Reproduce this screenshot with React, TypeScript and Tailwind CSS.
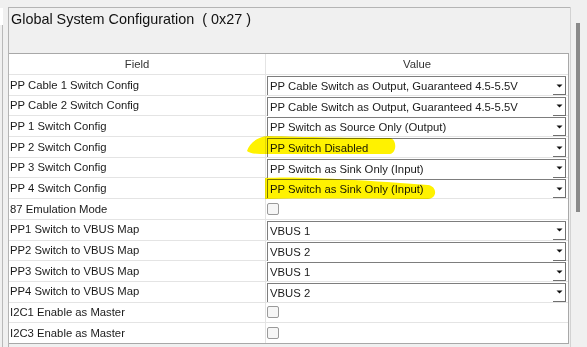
import React from 'react';

type Row =
  | { field: string; kind: 'select'; value: string }
  | { field: string; kind: 'check' };

const rows: Row[] = [
  { field: 'PP Cable 1 Switch Config', kind: 'select', value: 'PP Cable Switch as Output, Guaranteed 4.5-5.5V' },
  { field: 'PP Cable 2 Switch Config', kind: 'select', value: 'PP Cable Switch as Output, Guaranteed 4.5-5.5V' },
  { field: 'PP 1 Switch Config', kind: 'select', value: 'PP Switch as Source Only (Output)' },
  { field: 'PP 2 Switch Config', kind: 'select', value: 'PP Switch Disabled' },
  { field: 'PP 3 Switch Config', kind: 'select', value: 'PP Switch as Sink Only (Input)' },
  { field: 'PP 4 Switch Config', kind: 'select', value: 'PP Switch as Sink Only (Input)' },
  { field: '87 Emulation Mode', kind: 'check' },
  { field: 'PP1 Switch to VBUS Map', kind: 'select', value: 'VBUS 1' },
  { field: 'PP2 Switch to VBUS Map', kind: 'select', value: 'VBUS 2' },
  { field: 'PP3 Switch to VBUS Map', kind: 'select', value: 'VBUS 1' },
  { field: 'PP4 Switch to VBUS Map', kind: 'select', value: 'VBUS 2' },
  { field: 'I2C1 Enable as Master', kind: 'check' },
  { field: 'I2C3 Enable as Master', kind: 'check' },
];

const Combo: React.FC<{ value: string }> = ({ value }) => (
  <div className="h-[19px] mt-[1px] ml-[1px] mr-[2px] flex items-stretch bg-white border-t border-l border-[#7d7d7d]">
    <span className="flex-1 pl-[2px] leading-[18px] text-[#1a1a1a] truncate">{value}</span>
    <div className="w-[13px] flex items-center justify-center border-r border-b border-[#6f6f6f]">
      <svg width="7" height="4" viewBox="0 0 7 4">
        <path d="M0.5 0.5 L6.5 0.5 L3.5 3.5 Z" fill="#111" />
      </svg>
    </div>
  </div>
);

const Check: React.FC = () => (
  <div className="ml-[1px] w-[12px] h-[12px] rounded-[2px] border border-[#9a9a9a] bg-[#f6f6f6]" />
);

export default function App() {
  return (
    <div
      className="relative w-[587px] h-[347px] overflow-hidden bg-[#f0f0f0] flex"
      style={{ fontFamily: '"Liberation Sans", Arial, sans-serif' }}
    >
      {/* cut-off neighbour panel */}
      <div className="w-[8px] flex flex-col">
        <div className="h-[8px]" />
        <div className="h-[17px] w-[3px] bg-white" />
        <div className="flex-1 w-[3px] border-r border-[#b9b9b9]" />
      </div>

      {/* main panel */}
      <div className="flex-1 flex flex-col pt-[7px]">
        <div className="flex-1 flex flex-col border-t border-l border-[#b4b4b4]">
          <div className="h-[45px] pl-[2px] pt-[1px] text-[14.4px] text-[#111] whitespace-pre">
            Global System Configuration  ( 0x27 )
          </div>
          <div className="mr-[1px] border-t border-r border-b border-[#a8a8a8] bg-white text-[11.3px]">
            <div className="grid grid-cols-[257px_1fr] h-[20px] text-[#333]">
              <div className="flex items-center justify-center border-r border-[#e4e4e4]">Field</div>
              <div className="flex items-center justify-center">Value</div>
            </div>
            {rows.map((r, i) => (
              <div key={i} className="grid grid-cols-[257px_1fr] h-[20.7px] border-t border-[#e4e4e4]">
                <div className="pl-[1px] flex items-center text-[#1a1a1a] border-r border-[#e4e4e4] whitespace-nowrap">
                  {r.field}
                </div>
                <div className="flex flex-col justify-center">
                  {r.kind === 'select' ? <Combo value={r.value} /> : <Check />}
                </div>
              </div>
            ))}
          </div>
          <div className="flex-1" />
        </div>
      </div>

      {/* scrollbar */}
      <div className="w-[17px] pt-[7px] flex flex-col">
        <div className="flex-1 border-l border-[#d2d2d2] bg-[#f0f0f0] pt-[16px]">
          <div className="ml-[5px] w-[4px] h-[189px] bg-[#8a8a8a]" />
        </div>
      </div>

      {/* marker highlights drawn over the screenshot */}
      <svg className="absolute inset-0 pointer-events-none mix-blend-multiply" width="587" height="347">
        <path
          d="M247 151 C249 144 256 137 268 136 C300 137 360 138 390 138 C397 139 397 153 390 154 L268 154 C258 154 250 154 247 151 Z"
          fill="#fff200"
        />
        <path
          d="M265 178 C300 176 360 180 428 185 C437 186 438 198 428 199 C380 199 320 198 265 199 Z"
          fill="#fff200"
        />
      </svg>
    </div>
  );
}
